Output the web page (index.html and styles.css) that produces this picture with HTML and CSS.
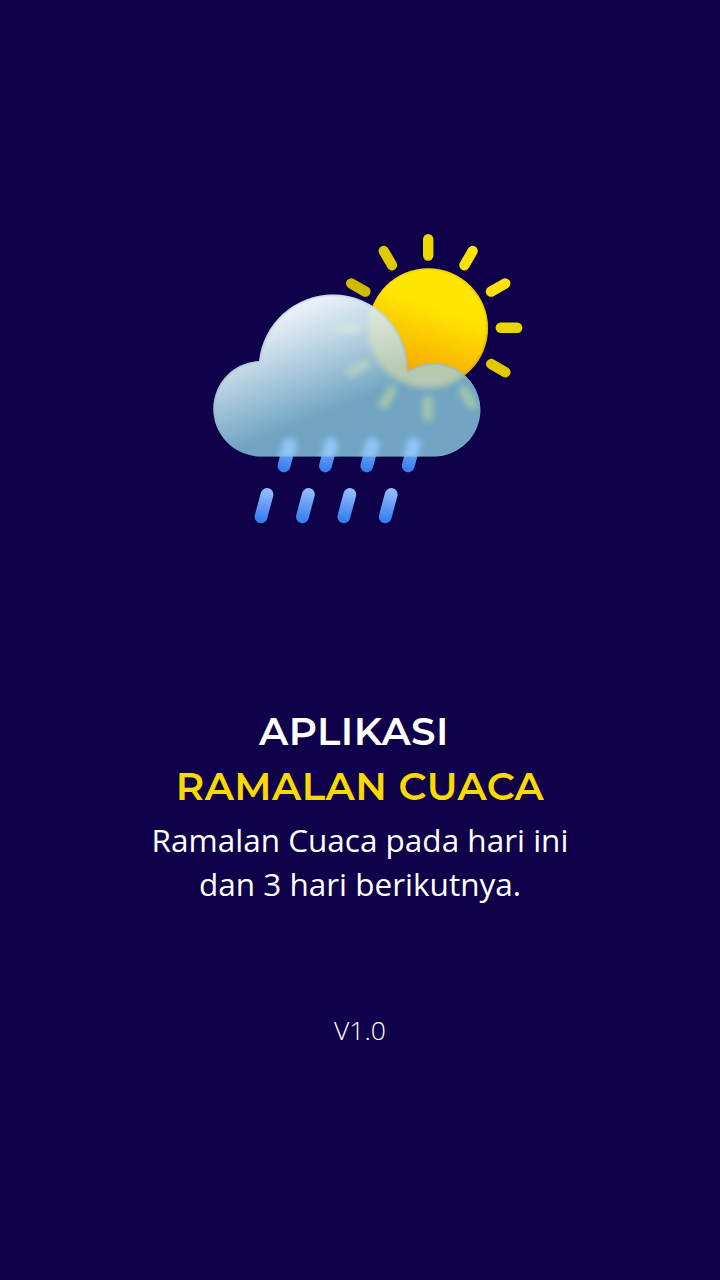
FILE: index.html
```html
<!DOCTYPE html>
<html lang="id">
<head>
<meta charset="utf-8">
<title>Ramalan Cuaca</title>
<link rel="stylesheet" href="styles.css">
</head>
<body>
<main class="splash">
<svg class="weather" viewBox="200 220 340 320" aria-hidden="true">
<defs>
<linearGradient id="sunFill" gradientUnits="userSpaceOnUse" x1="438" y1="308" x2="410" y2="391"><stop offset="0" stop-color="#ffe600"/><stop offset="1" stop-color="#f49800"/></linearGradient>
<linearGradient id="sunGlass" gradientUnits="userSpaceOnUse" x1="372" y1="310" x2="392" y2="375"><stop offset="0" stop-color="#deeadb"/><stop offset="1" stop-color="#b7c9b0"/></linearGradient>
<linearGradient id="cloudFill" gradientUnits="userSpaceOnUse" x1="303" y1="289" x2="349" y2="405"><stop offset="0" stop-color="#fafaff"/><stop offset=".45" stop-color="#bfd6e5"/><stop offset="1" stop-color="#70a4c2"/></linearGradient>
<linearGradient id="dropFill" gradientUnits="userSpaceOnUse" x1="266" y1="490" x2="262" y2="520"><stop offset="0" stop-color="#92bbff"/><stop offset="1" stop-color="#3880ee"/></linearGradient>
<filter id="soft" filterUnits="userSpaceOnUse" x="200" y="220" width="340" height="320"><feGaussianBlur stdDeviation="3.4"/></filter>
<filter id="softEdge" filterUnits="userSpaceOnUse" x="200" y="220" width="340" height="320"><feGaussianBlur stdDeviation=".8"/></filter>
<path id="cloud" d="M261 456.5A47.8 47.8 0 0 1 213.3 408.7A47.8 47.8 0 0 1 259 361A74.5 74.5 0 0 1 333 294.5A74.5 74.5 0 0 1 407.5 371.5A46.7 46.7 0 0 1 480.4 409.8A46.8 46.8 0 0 1 433.5 456.5Z"/>
<clipPath id="cloudClip"><use href="#cloud"/></clipPath>
<clipPath id="sunClip"><circle cx="428.2" cy="328" r="59.8"/></clipPath>
<path id="ray" d="M428.2 239.2V255.6"/>
<path id="drop" d="M267 494.5L261 516.8"/>
</defs>
<g class="rays">
<use href="#ray" stroke="#efd700"/>
<use href="#ray" stroke="#fce300" transform="rotate(30 428.4 328)"/>
<use href="#ray" stroke="#fbe200" transform="rotate(60 428.4 328)"/>
<use href="#ray" stroke="#edd600" transform="rotate(90 428.4 328)"/>
<use href="#ray" stroke="#dfc900" transform="rotate(120 428.4 328)"/>
<use href="#ray" stroke="#d1bb00" transform="rotate(300 428 328)"/>
<use href="#ray" stroke="#e0ca00" transform="rotate(330 428 328)"/>
</g>
<circle cx="428.2" cy="328" r="59.8" fill="url(#sunFill)"/>
<g clip-path="url(#sunClip)"><circle class="sun-rim" cx="427.6" cy="328" r="60" filter="url(#softEdge)"/></g>
<g class="drops">
<use href="#drop" x="23" y="-51"/><use href="#drop" x="64.4" y="-51"/><use href="#drop" x="105.8" y="-51"/><use href="#drop" x="147.2" y="-51"/>
<use href="#drop"/><use href="#drop" x="41.4"/><use href="#drop" x="82.8"/><use href="#drop" x="124.2"/>
</g>
<use href="#cloud" fill="url(#cloudFill)"/>
<g clip-path="url(#cloudClip)">
<g filter="url(#soft)">
<circle cx="428" cy="328" r="60" fill="url(#sunGlass)"/>
<g class="rays" stroke="#a9cbac" opacity=".85">
<use href="#ray" transform="rotate(150 428 328)"/>
<use href="#ray" transform="rotate(180 428 328)"/>
<use href="#ray" transform="rotate(210 428 328)"/>
<use href="#ray" transform="rotate(240 428 328)" stroke="#b4d3c0"/>
<use href="#ray" transform="rotate(270 428 328)" stroke="#d2e5e0"/>
</g>
</g>
<g class="glow" filter="url(#soft)">
<path d="M289.6 444.5L284 466M331 444.5L325.4 466M372.4 444.5L366.8 466M413.8 444.5L408.2 466"/>
</g>
<use class="cloud-rim" href="#cloud" filter="url(#softEdge)"/>
</g>
</svg>
<h1 class="title"><span class="title-app">APLIKASI</span><span class="title-name">RAMALAN CUACA</span></h1>
<p class="summary">Ramalan Cuaca pada hari ini<br>dan 3 hari berikutnya.</p>
<p class="version">V1.0</p>
</main>
</body>
</html>
```
FILE: styles.css
```css
* { box-sizing: border-box; }
body { margin: 0; background: #0f024a; }
.splash {
  display: flex;
  flex-direction: column;
  align-items: center;
  width: 720px;
  height: 1280px;
  padding-top: 220px;
  color: #fff;
  font-family: "Open Sans", sans-serif;
  text-align: center;
}
.weather { display: block; width: 340px; height: 320px; margin-left: 20px; }
.rays { fill: none; stroke-width: 10.4; stroke-linecap: round; }
.drops { fill: none; stroke: url(#dropFill); stroke-width: 12.8; stroke-linecap: round; }
.glow { fill: none; stroke: #93cbff; stroke-width: 14; stroke-linecap: round; opacity: .9; }
.sun-rim { fill: none; stroke: #b39e00; stroke-width: 1.5; opacity: .65; }
.cloud-rim { fill: none; stroke: #82acc4; stroke-width: 1.5; opacity: .7; }
.title {
  display: flex;
  flex-direction: column;
  align-items: center;
  margin: 164px 0 0;
  font-family: Montserrat, Inter, sans-serif;
  font-size: 39px;
  font-weight: 600;
  letter-spacing: .45px;
  line-height: 55px;
  white-space: nowrap;
}
.title-app { margin-right: 12px; }
.title-name { color: #f9da00; }
.summary { margin: 4px 0 0; font-size: 31.5px; line-height: 44px; }
.version { margin: 106px 0 0; font-size: 26.5px; font-weight: 300; line-height: 36px; }
```
